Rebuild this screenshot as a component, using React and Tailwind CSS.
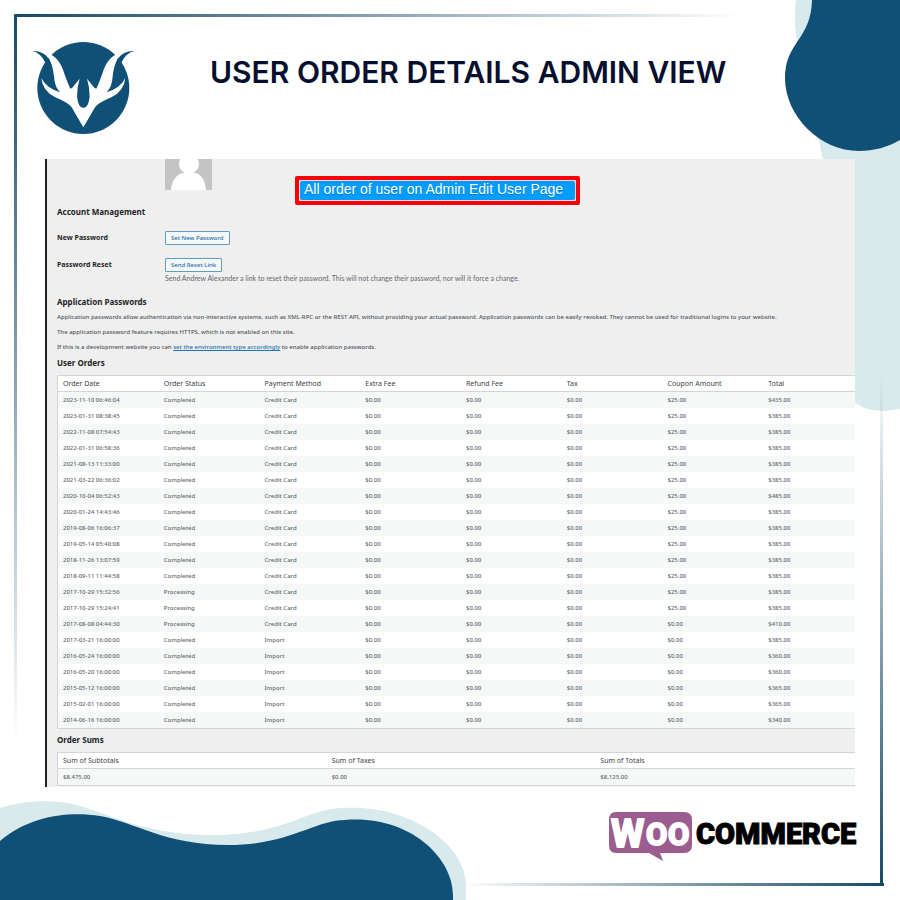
import React from "react";

const orders = [
  ["2023-11-10 06:46:04", "Completed", "Credit Card", "$25.00", "$435.00"],
  ["2023-01-31 08:38:45", "Completed", "Credit Card", "$25.00", "$385.00"],
  ["2022-11-08 07:54:43", "Completed", "Credit Card", "$25.00", "$385.00"],
  ["2022-01-31 06:58:36", "Completed", "Credit Card", "$25.00", "$385.00"],
  ["2021-08-13 11:33:00", "Completed", "Credit Card", "$25.00", "$385.00"],
  ["2021-03-22 06:36:02", "Completed", "Credit Card", "$25.00", "$385.00"],
  ["2020-10-04 06:52:43", "Completed", "Credit Card", "$25.00", "$485.00"],
  ["2020-01-24 14:43:46", "Completed", "Credit Card", "$25.00", "$385.00"],
  ["2019-08-06 16:06:37", "Completed", "Credit Card", "$25.00", "$385.00"],
  ["2019-05-14 05:40:08", "Completed", "Credit Card", "$25.00", "$385.00"],
  ["2018-11-26 13:07:59", "Completed", "Credit Card", "$25.00", "$385.00"],
  ["2018-09-11 11:44:58", "Completed", "Credit Card", "$25.00", "$385.00"],
  ["2017-10-29 15:32:56", "Processing", "Credit Card", "$25.00", "$385.00"],
  ["2017-10-29 15:24:41", "Processing", "Credit Card", "$25.00", "$385.00"],
  ["2017-08-08 04:44:30", "Processing", "Credit Card", "$0.00", "$410.00"],
  ["2017-03-21 16:00:00", "Completed", "Import", "$0.00", "$385.00"],
  ["2016-05-24 16:00:00", "Completed", "Import", "$0.00", "$360.00"],
  ["2016-05-20 16:00:00", "Completed", "Import", "$0.00", "$360.00"],
  ["2015-05-12 16:00:00", "Completed", "Import", "$0.00", "$365.00"],
  ["2015-02-01 16:00:00", "Completed", "Import", "$0.00", "$365.00"],
  ["2014-06-16 16:00:00", "Completed", "Import", "$0.00", "$340.00"],
];

const orderRows = orders.map(([date, status, method, coupon, total]) => [
  date, status, method, "$0.00", "$0.00", "$0.00", coupon, total,
]);

function DataTable({ label, columns, rows }) {
  return (
    <table
      aria-label={label}
      className="w-[calc(100%+10px)] table-fixed border-separate border-spacing-0 border border-[#d3d5d6] bg-white text-left"
    >
      <thead>
        <tr>
          {columns.map((c) => (
            <th key={c} className="h-4 border-b border-[#d3d5d6] p-0 pl-[5px] text-[7px] leading-[15px] font-normal text-[#3c434a]">
              {c}
            </th>
          ))}
        </tr>
      </thead>
      <tbody>
        {rows.map((row) => (
          <tr key={row[0]} className="odd:bg-[#f6f7f7]">
            {row.map((cell, i) => (
              <td key={i} className="h-4 p-0 pl-[5px] text-[6px] leading-4 font-medium text-[#636a71]">
                {cell}
              </td>
            ))}
          </tr>
        ))}
      </tbody>
    </table>
  );
}

function Heading({ children }) {
  return <h2 className="text-[8px] leading-4 font-bold text-[#1d2327]">{children}</h2>;
}

function SmallButton({ id, children }) {
  return (
    <button
      id={id}
      type="button"
      className="block h-[14px] rounded-[1px] border border-[#5f9cc2] bg-[#f6f7f7] px-[5px] text-[6px] leading-3 font-medium text-[#2271b1]"
    >
      {children}
    </button>
  );
}

function AntlerLogo() {
  return (
    <svg viewBox="0 0 324 300" className="h-[100px] w-[108px]" role="img" aria-label="Antler logo">
      <circle cx="160" cy="150" r="138" fill="#115076" />
      <path
        fill="#fff"
        d="M64 50 Q86 62 98 92 Q110 128 121 152 L127 149 L149 122 Q141 146 141 176 Q145 210 160 210 Q175 210 179 176 Q179 146 171 122 L193 149 L199 152 Q210 128 222 92 Q234 62 256 50 L270 20 L312 40 Q280 38 263 62 Q251 84 248 115 Q246 148 230 163 Q271 150 286 120 Q282 160 244 178 Q204 195 195 208 Q178 238 160 268 Q142 238 125 208 Q116 195 76 178 Q38 160 34 120 Q49 150 90 163 Q74 148 72 115 Q69 84 57 62 Q40 38 8 40 L50 20 Z"
      />
      <path fill="#115076" d="M7 39 Q40 38 57 62 L66 86 L46 74 Q34 46 7 39 Z" />
      <path fill="#115076" d="M313 39 Q280 38 263 62 L254 86 L274 74 Q286 46 313 39 Z" />
    </svg>
  );
}

function WooLogo() {
  return (
    <svg viewBox="0 0 250 52" className="h-[52px] w-[250px]" role="img" aria-label="WooCommerce">
      <path fill="#9b5c8f" d="M8 1 H76 Q84 1 84 9 V34 Q84 42 76 42 H52 L55 50 L41 42 H8 Q1 42 1 34 V9 Q1 1 8 1 Z" />
      <g fontFamily="Roboto, sans-serif">
        <g fill="#fff" stroke="#fff" strokeWidth="2" strokeLinejoin="round" fontWeight="700">
          <text x="3" y="36" fontSize="38">W</text>
          <text x="38" y="34" fontSize="31">O</text>
          <text x="60" y="34" fontSize="31">O</text>
        </g>
        <text x="88" y="33" fontSize="29" fontWeight="900" fill="#000" stroke="#000" strokeWidth="1">COMMERCE</text>
      </g>
    </svg>
  );
}

function Decorations() {
  return (
    <div aria-hidden="true">
      <svg viewBox="0 0 120 420" className="absolute top-0 right-0 h-[420px] w-[120px]">
        <path fill="#d9eaec" d="M16 0 C13 20 16 38 21 62 L43 159 L66 390 C72 407 90 411 105 411 L120 409 V0 Z" />
        <path fill="#115076" d="M32 0 C31 40 5 42 5 78 C5 116 40 151 79 151 C94 151 108 147 120 140 V0 Z" />
      </svg>
      <svg viewBox="0 0 480 110" className="absolute bottom-0 left-0 h-[110px] w-[480px]">
        <path fill="#d9eaec" d="M0 18 C25 10 55 10 72 14 C105 21 140 45 213 45 C285 45 308 18 343 18 C410 14 466 55 466 95 L466 110 H0 Z" />
        <path fill="#115076" d="M0 51 C30 25 70 21 100 26 C135 32 165 55 228 55 C290 55 315 30 345 30 C410 25 453 68 453 105 V110 H0 Z" />
      </svg>
      <div className="absolute top-[14px] left-[14px] h-[3px] w-[730px] rounded-full bg-linear-to-r from-[#174966] to-transparent" />
      <div className="absolute top-[14px] left-[14px] h-[730px] w-[3px] rounded-full bg-linear-to-b from-[#174966] to-transparent" />
      <div className="absolute right-4 bottom-[14px] h-[3px] w-[424px] bg-linear-to-l from-[#174966] to-transparent" />
      <div className="absolute right-[17px] bottom-[14px] h-[513px] w-[3px] bg-linear-to-t from-[#174966] to-transparent" />
    </div>
  );
}

export default function App() {
  return (
    <div className="relative flex min-h-screen flex-col overflow-hidden bg-white font-['Noto_Sans',sans-serif]">
      <Decorations />
      <header className="relative flex h-[159px] items-start pl-[30px]">
        <div className="pt-[38px]">
          <AntlerLogo />
        </div>
        <h1 className="pt-[54px] pl-[72px] font-['Inter',sans-serif] text-[30px] leading-9 font-semibold whitespace-nowrap text-[#060f2e]">
          USER ORDER DETAILS ADMIN VIEW
        </h1>
      </header>

      <main className="relative mx-[45px] overflow-hidden border-l-2 border-[#1d2327] bg-[#efefef] pb-px pl-[10px]">
        <p className="absolute top-[17px] left-[248px] rounded-[2px] border-4 border-[#fb0006] bg-[#e9d5d8] p-px">
          <span className="block rounded-[2px] bg-[#009dff] pr-3 pb-[2px] pl-[4px] font-['Liberation_Sans',sans-serif] text-[14px] leading-[17px] whitespace-nowrap text-white text-shadow-xs">
            All order of user on Admin Edit User Page
          </span>
        </p>

        <svg viewBox="0 0 47 31" className="ml-[108px] h-[31px] w-[47px]" role="img" aria-label="User avatar">
          <rect width="47" height="31" fill="#c4c4c4" />
          <circle cx="24" cy="5" r="10" fill="#fff" />
          <path fill="#fff" d="M6 31 C7 18 15 14 18 14 H30 C34 14 40 19 41 31 Z" />
        </svg>

        <section className="pt-[14px]">
          <Heading>Account Management</Heading>
          <div className="mt-[11px] flex items-center">
            <label htmlFor="new-password" className="w-[108px] text-[7px] leading-[14px] font-bold text-[#1d2327]">New Password</label>
            <SmallButton id="new-password">Set New Password</SmallButton>
          </div>
          <div className="mt-[13px] flex items-start">
            <label htmlFor="password-reset" className="w-[108px] text-[7px] leading-[14px] font-bold text-[#1d2327]">Password Reset</label>
            <div>
              <SmallButton id="password-reset">Send Reset Link</SmallButton>
              <p className="font-['Lato',sans-serif] text-[7px] leading-3 text-[#646970]">
                Send Andrew Alexander a link to reset their password. This will not change their password, nor will it force a change.
              </p>
            </div>
          </div>
        </section>

        <section className="pt-[10px] text-[6px] font-medium text-[#50575e]">
          <Heading>Application Passwords</Heading>
          <p className="leading-[15px]">
            Application passwords allow authentication via non-interactive systems, such as XML-RPC or the REST API, without providing your actual password. Application passwords can be easily revoked. They cannot be used for traditional logins to your website.
          </p>
          <p className="leading-[15px]">The application password feature requires HTTPS, which is not enabled on this site.</p>
          <p className="leading-[15px]">
            If this is a development website you can{" "}
            <a href="#environment" className="text-[#2271b1] underline">set the environment type accordingly</a> to enable application passwords.
          </p>
        </section>

        <section>
          <Heading>User Orders</Heading>
          <div className="pt-1">
            <DataTable
              label="User Orders"
              columns={["Order Date", "Order Status", "Payment Method", "Extra Fee", "Refund Fee", "Tax", "Coupon Amount", "Total"]}
              rows={orderRows}
            />
          </div>
        </section>

        <section className="pt-[3px]">
          <Heading>Order Sums</Heading>
          <div className="pt-1">
            <DataTable
              label="Order Sums"
              columns={["Sum of Subtotals", "Sum of Taxes", "Sum of Totals"]}
              rows={[["$8,475.00", "$0.00", "$8,125.00"]]}
            />
          </div>
        </section>
      </main>

      <footer className="relative flex justify-end pt-6 pr-[42px]">
        <WooLogo />
      </footer>
    </div>
  );
}
